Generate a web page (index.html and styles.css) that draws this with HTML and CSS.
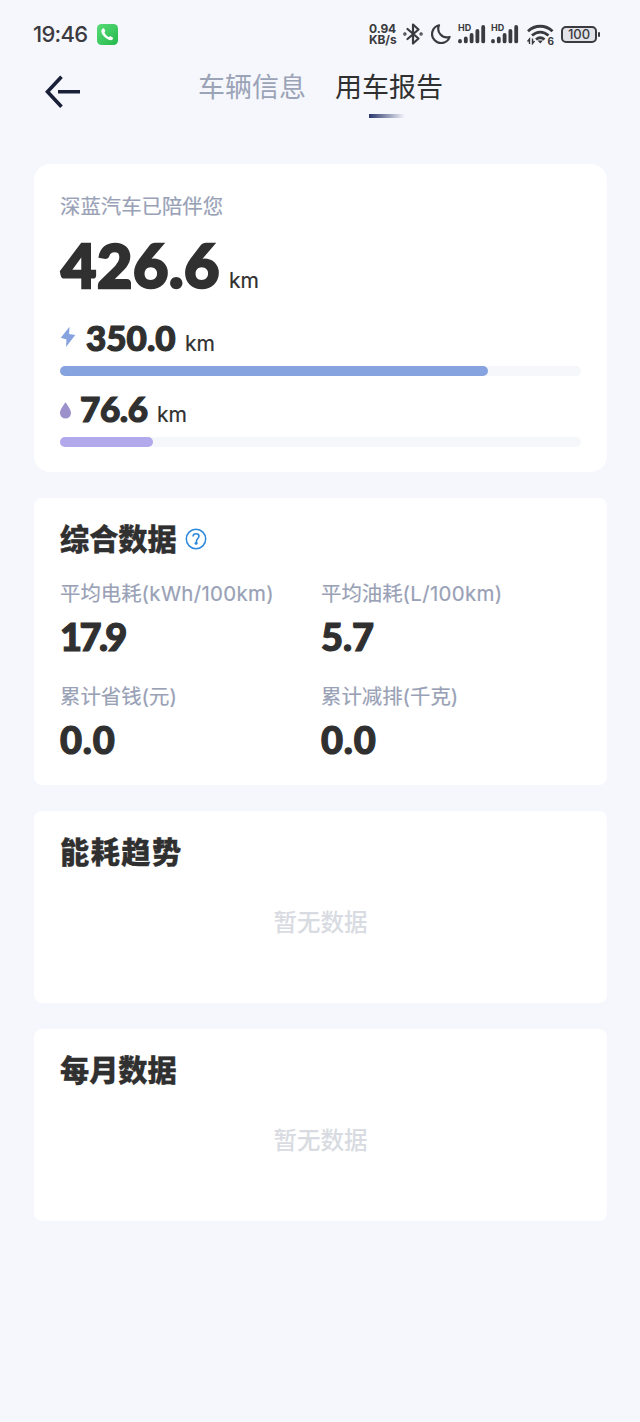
FILE: index.html
```
<!doctype html>
<html lang="zh-CN">
<head>
  <meta charset="utf-8">
  <title>用车报告</title>
  <link rel="stylesheet" href="styles.css">
</head>
<body>

  <div class="status">
    <span class="time">19:46</span>
    <svg class="phone" width="21" height="21" viewBox="0 0 21 21">
      <defs>
        <linearGradient id="green" x1="0" y1="0" x2="1" y2="1">
          <stop offset="0" stop-color="#58dc78"/>
          <stop offset="1" stop-color="#25b84b"/>
        </linearGradient>
      </defs>
      <rect width="21" height="21" rx="4.5" fill="url(#green)"/>
      <path d="M5 5.2c.8-1 1.9-1.1 2.3-.3l.9 1.7c.3.7-.7 1.3-.7 2 .5 1.8 2.3 3.7 4.3 4.3.7.1 1.2-.9 1.9-.6l2 1.2c.8.5.5 1.5-.5 2.3-2.6 1.8-9-3-10.500-6.800C4.200 7.500 4.300 6 5 5.200z" fill="#fff"/>
    </svg>
    <div class="status-right">
      <div class="speed"><b>0.94</b><b>KB/s</b></div>
      <svg class="bluetooth" width="20" height="24" viewBox="0 0 20 24" fill="none" stroke="#3a3a40" stroke-width="2.2" stroke-linejoin="round" stroke-linecap="round">
        <path d="M4.500 7l11 9.500-5.500 5V2.500l5.500 5-11 9.500"/>
        <circle cx="1.900" cy="12" r=".6"/><circle cx="18.100" cy="12" r=".6"/>
      </svg>
      <svg class="moon" width="20" height="20" viewBox="0 0 20 20" fill="none" stroke="#3a3a40" stroke-width="2.2" stroke-linejoin="round">
        <path d="M8 1.300A9 9 0 1 0 18.600 13 8.700 8.700 0 0 1 8 1.300z"/>
      </svg>
      <div class="signal">
        <span class="hd">HD</span>
        <svg width="28" height="20" viewBox="0 0 28 20" stroke="#3a3a40" stroke-width="3.800" stroke-linecap="round">
          <path d="M2 17v.4M7.800 14.500v2.900M13.600 11v6.400M19.400 7v10.400M25.200 3v14.400"/>
        </svg>
      </div>
      <div class="signal second">
        <span class="hd">HD</span>
        <svg width="28" height="20" viewBox="0 0 28 20" stroke="#3a3a40" stroke-width="3.800" stroke-linecap="round">
          <path d="M2 17v.4M7.800 14.500v2.900M13.600 11v6.400M19.400 7v10.400M25.200 3v14.400"/>
        </svg>
      </div>
      <div class="wifi">
        <svg width="27" height="21" viewBox="0 0 27 21" fill="none" stroke="#3a3a40" stroke-width="2.800">
          <path d="M1 7.200c7-6.600 17.500-6.600 24.500 0M5 11.500c5-4.600 11.500-4.600 16.500 0M9 15.500c2.700-2.300 5.800-2.300 8.500 0"/>
          <path d="M10.500 16.500h5.500l-2.700 3z" fill="#3a3a40" stroke="none"/>
          <path d="M2.500 20v-5l-2 2.500M5.500 14.500v5l2-2.500" stroke-width="1.400"/>
        </svg>
        <span class="wifi-gen">6</span>
      </div>
      <div class="battery"><span>100</span></div>
    </div>
  </div>

  <div class="header">
    <svg class="back" width="36" height="34" viewBox="0 0 36 34" fill="none" stroke="#1b2039" stroke-width="3.600">
      <path d="M16.500 1.800L2.500 16.800l14 15M13 16.800h22"/>
    </svg>
    <div class="tab">车辆信息</div>
    <div class="tab active">用车报告</div>
  </div>

  <div class="card total">
    <div class="label">深蓝汽车已陪伴您</div>
    <div class="distance"><b>426.6</b><span class="km">km</span></div>
    <div class="part electric">
      <svg width="16" height="22" viewBox="0 0 16 22"><path d="M9.500.8L.8 11.800l5.700 1.800L6 21l9.300-12-6.200-1.100z" fill="#86a3df"/></svg>
      <b>350.0</b><span class="km">km</span>
    </div>
    <div class="bar"><div class="fill blue" style="width:82.1%"></div></div>
    <div class="part fuel">
      <svg width="11" height="17" viewBox="0 0 11 17"><path d="M5.500.3C7.800 3.800 11 7.500 11 11.200a5.500 5.300 0 0 1-11 0C0 7.500 3.200 3.800 5.500.3z" fill="#9c91ca"/></svg>
      <b>76.6</b><span class="km">km</span>
    </div>
    <div class="bar"><div class="fill purple" style="width:17.9%"></div></div>
  </div>

  <div class="card summary">
    <h2>综合数据
      <svg width="22" height="22" viewBox="0 0 22 22" fill="none" stroke="#2c89dc">
        <circle cx="11" cy="11" r="9.700" stroke-width="1.500"/>
        <path d="M8 8.500c.1-1.800 1.300-2.700 3-2.700s3 .9 3 2.500c0 2-2.500 2.400-2.500 4.700v1.500" stroke-width="1.600"/>
        <circle cx="11.100" cy="15.300" r="1.500" fill="#2c89dc" stroke="none"/>
      </svg>
    </h2>
    <div class="stats">
      <div class="stat"><div class="label">平均电耗<i>(kWh/100km)</i></div><b class="tight">17.9</b></div>
      <div class="stat"><div class="label">平均油耗<i>(L/100km)</i></div><b>5.7</b></div>
      <div class="stat"><div class="label">累计省钱(元)</div><b class="zero">0.0</b></div>
      <div class="stat"><div class="label">累计减排(千克)</div><b class="zero">0.0</b></div>
    </div>
  </div>

  <div class="card chart">
    <h2 class="wide">能耗趋势</h2>
    <div class="empty">暂无数据</div>
  </div>

  <div class="card chart">
    <h2>每月数据</h2>
    <div class="empty">暂无数据</div>
  </div>

</body>
</html>
```

FILE: styles.css
```
* {
  box-sizing: border-box;
}

body {
  margin: 0;
  min-height: 1422px;
  background: #f5f7fc;
  color: #303030;
  font-family: Inter, "Noto Sans CJK SC", sans-serif;
}

svg {
  display: block;
  flex: none;
}

.status {
  display: flex;
  align-items: center;
  height: 68px;
  padding: 0 43px 0 33px;
  color: #3a3a40;
}

.time {
  width: 64px;
  font-size: 22px;
  font-weight: 500;
  letter-spacing: -0.7px;
}

.status-right {
  display: flex;
  align-items: center;
  margin-left: auto;
}

.speed {
  width: 30px;
  margin-right: 4px;
  font-size: 12px;
  line-height: 11px;
}

.speed b {
  display: block;
  height: 11px;
  letter-spacing: -0.1px;
}

.moon {
  margin: 0 7px 0 8px;
}

.signal {
  position: relative;
  margin-right: 5px;
}

.signal.second {
  margin-right: 8px;
}

.hd {
  position: absolute;
  left: 0;
  top: -1px;
  font-size: 9px;
  line-height: 9px;
  font-weight: 700;
}

.wifi {
  position: relative;
  margin-right: 7px;
}

.wifi-gen {
  position: absolute;
  right: 0;
  bottom: -1px;
  font-size: 10px;
  line-height: 10px;
  font-weight: 700;
}

.battery {
  position: relative;
  width: 36px;
  height: 17px;
  border: 2px solid #3a3a40;
  border-radius: 5px;
  background: #e2e3e8;
  font-size: 13px;
  line-height: 13px;
  font-weight: 500;
  text-align: center;
}

.battery::after {
  content: "";
  position: absolute;
  right: -5px;
  top: 4px;
  width: 2px;
  height: 5px;
  border-radius: 1px;
  background: #3a3a40;
}

.header {
  display: flex;
  align-items: flex-start;
  height: 96px;
  padding-left: 45px;
}

.back {
  margin: 7px 117px 0 0;
}

.tab {
  margin-right: 29px;
  color: #9ba3b7;
  font-family: "Noto Sans CJK SC", sans-serif;
  font-size: 27px;
  line-height: 36px;
}

.tab.active {
  color: #303030;
}

.tab.active::after {
  content: "";
  display: block;
  width: 36px;
  height: 4px;
  margin: 10px 0 0 34px;
  background: linear-gradient(90deg, #28366c, #f5f7fc);
}

.card {
  width: 573px;
  margin: 0 0 26px 34px;
  padding: 0 26px;
  border-radius: 8px;
  background: #fff;
}

.label {
  color: #99a1b6;
  font-size: 20.4px;
  line-height: 24px;
  white-space: nowrap;
  -webkit-text-stroke: 0.2px;
}

.label i {
  font-style: normal;
  letter-spacing: 0.35px;
}

.total {
  height: 308px;
  padding-top: 31px;
  border-radius: 16px;
}

.distance {
  display: flex;
  align-items: baseline;
  height: 60px;
  margin-top: 16px;
  line-height: 60px;
}

.distance b {
  width: 168px;
  margin-left: 1px;
  font-size: 61px;
  letter-spacing: 0.6px;
}

.distance b,
.part b,
.stat b {
  font-family: Lato, sans-serif;
  font-weight: 900;
  -webkit-text-stroke: 1.2px;
}

.distance b {
  -webkit-text-stroke-width: 2.4px;
}

.km {
  font-size: 21px;
  -webkit-text-stroke: 0.2px;
}

.part {
  display: flex;
  align-items: baseline;
  height: 40px;
  line-height: 40px;
}

.part svg {
  align-self: center;
}

.part b {
  font-size: 35px;
}

.electric {
  margin: 22px 0 9px;
}

.electric b {
  width: 99px;
  margin-left: 10px;
}

.fuel {
  margin: 12px 0 9px;
}

.fuel svg {
  margin-top: 5px;
}

.fuel b {
  width: 77px;
  margin-left: 9px;
  letter-spacing: -0.4px;
}

.bar {
  height: 10px;
  border-radius: 5px;
  background: #f5f7fb;
}

.fill {
  height: 10px;
  border-radius: 5px;
}

.blue {
  background: #86a3df;
}

.purple {
  background: #b2a8ec;
}

h2 {
  display: flex;
  align-items: center;
  gap: 8px;
  height: 40px;
  margin: 0;
  font-size: 29.2px;
  line-height: 40px;
  font-weight: 900;
  -webkit-text-stroke: 0.3px;
}

h2 svg {
  margin-top: -2px;
}

h2.wide {
  letter-spacing: 1.5px;
}

.summary {
  height: 287px;
  padding-top: 22px;
}

.stats {
  display: grid;
  grid-template-columns: 261px 1fr;
  grid-auto-rows: 103px;
  margin-top: 22px;
}

.stat b {
  display: block;
  margin-top: 10px;
  font-size: 38px;
  line-height: 40px;
}

.stat b.tight {
  letter-spacing: -2.6px;
}

.stat b.zero {
  letter-spacing: 0.8px;
}

.chart {
  height: 192px;
  padding-top: 22px;
}

.empty {
  margin-top: 34px;
  color: #d8dbe1;
  font-size: 23.5px;
  line-height: 32px;
  font-weight: 500;
  text-align: center;
}
```
